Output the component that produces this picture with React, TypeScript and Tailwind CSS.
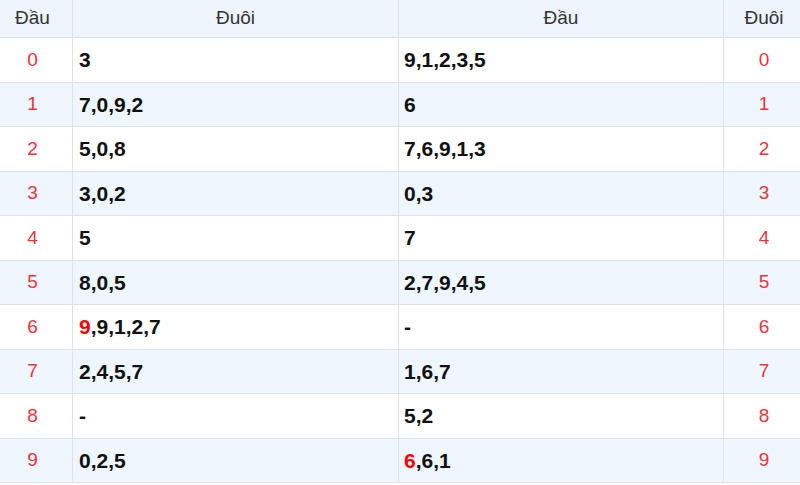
import React from 'react';

// Each row: head digit, tails, heads (from the reverse side), tail digit
interface Row {
  n: number;
  duoi: string;
  dau: string;
  hlDuoi?: boolean;
  hlDau?: boolean;
}

const rows: Row[] = [
  { n: 0, duoi: '3', dau: '9,1,2,3,5' },
  { n: 1, duoi: '7,0,9,2', dau: '6' },
  { n: 2, duoi: '5,0,8', dau: '7,6,9,1,3' },
  { n: 3, duoi: '3,0,2', dau: '0,3' },
  { n: 4, duoi: '5', dau: '7' },
  { n: 5, duoi: '8,0,5', dau: '2,7,9,4,5' },
  { n: 6, duoi: '9,9,1,2,7', dau: '-', hlDuoi: true },
  { n: 7, duoi: '2,4,5,7', dau: '1,6,7' },
  { n: 8, duoi: '-', dau: '5,2' },
  { n: 9, duoi: '0,2,5', dau: '6,6,1', hlDau: true },
];

function Values({ text, highlight }: { text: string; highlight?: boolean }) {
  if (!highlight) return <>{text}</>;
  return (
    <>
      <span className="text-[#f00]">{text[0]}</span>
      {text.slice(1)}
    </>
  );
}

export default function App() {
  return (
    <div className="w-[800px] h-[485px] bg-white overflow-hidden font-['Liberation_Sans',Arial,sans-serif]">
      <div className="grid grid-cols-[73px_326px_325px_76px] grid-rows-[38px_repeat(10,44.5px)]">
        {/* header */}
        <div className="flex items-center justify-center pr-[7px] bg-[#eef5fc] border-r border-b border-[#dde2e8] text-[19px] text-[#333]">Đầu</div>
        <div className="flex items-center justify-center bg-[#eef5fc] border-r border-b border-[#dde2e8] text-[19px] text-[#333]">Đuôi</div>
        <div className="flex items-center justify-center bg-[#eef5fc] border-r border-b border-[#dde2e8] text-[19px] text-[#333]">Đầu</div>
        <div className="flex items-center justify-center pl-[4px] bg-[#eef5fc] border-b border-[#dde2e8] text-[19px] text-[#333]">Đuôi</div>

        {rows.map((r) => {
          const bg = r.n % 2 === 1 ? 'bg-[#eef6fe]' : 'bg-white';
          return (
            <React.Fragment key={r.n}>
              <div className={`flex items-center justify-center pr-[7px] border-r border-b border-[#dde2e8] text-[19px] text-[#f0313a] ${bg}`}>
                {r.n}
              </div>
              <div className={`flex items-center pl-[6px] border-r border-b border-[#dde2e8] text-[21px] font-bold text-[#111] ${bg}`}>
                <Values text={r.duoi} highlight={r.hlDuoi} />
              </div>
              <div className={`flex items-center pl-[5px] border-r border-b border-[#dde2e8] text-[21px] font-bold text-[#111] ${bg}`}>
                <Values text={r.dau} highlight={r.hlDau} />
              </div>
              <div className={`flex items-center justify-center pl-[4px] border-b border-[#dde2e8] text-[19px] text-[#f0313a] ${bg}`}>
                {r.n}
              </div>
            </React.Fragment>
          );
        })}
      </div>
    </div>
  );
}
